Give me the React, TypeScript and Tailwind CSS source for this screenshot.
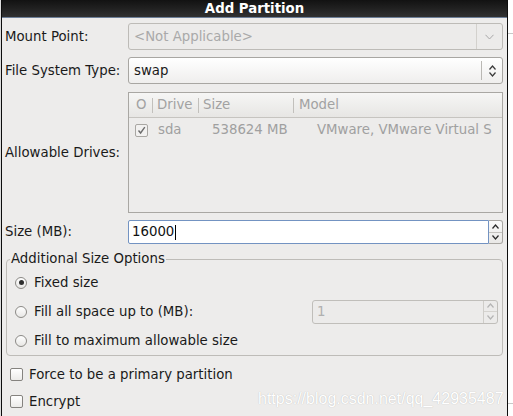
import React from 'react';

const font = "font-['DejaVu_Sans','Liberation_Sans',sans-serif]";

function Caret({ dir, color = '#3a3a3a' }: { dir: 'up' | 'down'; color?: string }) {
  return (
    <svg width="7" height="5" viewBox="0 0 7 5" className="block">
      {dir === 'up' ? (
        <path d="M0.5 4.5 L3.5 1 L6.5 4.5" fill="none" stroke={color} strokeWidth="1.2" />
      ) : (
        <path d="M0.5 0.5 L3.5 4 L6.5 0.5" fill="none" stroke={color} strokeWidth="1.2" />
      )}
    </svg>
  );
}

function Radio({ checked }: { checked?: boolean }) {
  return (
    <span className="flex h-[12px] w-[12px] items-center justify-center rounded-full border border-[#8c8a86] bg-gradient-to-b from-[#ffffff] to-[#e8e7e5]">
      {checked && <span className="h-[5px] w-[5px] rounded-full bg-[#2e2e2e]" />}
    </span>
  );
}

function CheckBox({ checked, disabled }: { checked?: boolean; disabled?: boolean }) {
  return (
    <span
      className={`flex h-[13px] w-[13px] items-center justify-center rounded-[2px] border ${
        disabled ? 'border-[#a9a7a3] bg-[#f2f1f0]' : 'border-[#85837f] bg-gradient-to-b from-[#ffffff] to-[#ecebe9]'
      }`}
    >
      {checked && (
        <svg width="9" height="9" viewBox="0 0 9 9">
          <path d="M1.5 4.5 L3.6 7 L7.8 1.2" fill="none" stroke={disabled ? '#6d6d6d' : '#222'} strokeWidth="1.4" />
        </svg>
      )}
    </span>
  );
}

function Row({ label, height, children }: { label: string; height: string; children: React.ReactNode }) {
  return (
    <div className={`flex items-center ${height}`}>
      <span className="w-[123px] shrink-0 text-[#1a1a1a]">{label}</span>
      <div className="flex h-full flex-1">{children}</div>
    </div>
  );
}

export default function App() {
  return (
    <div className={`relative flex h-[416px] w-[513px] overflow-hidden bg-[#f7f7f7] ${font} text-[13.3px] leading-[16px]`}>
      <div className="w-[1px] shrink-0 bg-[#dcdcdc]" />

      <div className="flex w-[507px] shrink-0 flex-col border-x border-[#0d0d0d] bg-[#edeceb]">
        <div className="flex h-[18px] shrink-0 items-center justify-center border-b border-[#6d7f98] bg-gradient-to-b from-[#121212] to-[#313131] text-[13.3px] font-bold text-white">
          Add Partition
        </div>

        <div className="flex flex-1 flex-col pl-[3px] pr-[4px] pt-[5px]">
          <Row label="Mount Point:" height="h-[27px]">
            <div className="flex flex-1 items-center rounded-[3px] border border-[#bdbbb7] bg-[#ecebea]">
              <span className="flex-1 pl-[5px] text-[#a9a9a9]">&lt;Not Applicable&gt;</span>
              <span className="h-full w-px bg-[#d3d1cd]" />
              <span className="flex w-[25px] justify-center">
                <svg width="9" height="6" viewBox="0 0 9 6">
                  <path d="M0.5 0.8 L4.5 5 L8.5 0.8" fill="none" stroke="#a8a8a8" strokeWidth="1" />
                </svg>
              </span>
            </div>
          </Row>

          <div className="h-[7px]" />

          <Row label="File System Type:" height="h-[27px]">
            <div className="flex flex-1 items-center rounded-[3px] border border-[#a8a6a2] bg-gradient-to-b from-[#ffffff] to-[#efeeed]">
              <span className="flex-1 pl-[5px] text-[#1a1a1a]">swap</span>
              <span className="h-[19px] w-px bg-[#bab8b4]" />
              <span className="flex w-[20px] flex-col items-center gap-[2px]">
                <Caret dir="up" />
                <Caret dir="down" />
              </span>
            </div>
          </Row>

          <div className="h-[8px]" />

          <Row label="Allowable Drives:" height="h-[121px]">
            <div className="flex flex-1 flex-col overflow-hidden border border-[#a9a7a3] bg-[#edeceb]">
              <div className="flex h-[25px] shrink-0 items-center border-b border-[#c6c4c0] bg-gradient-to-b from-[#f6f6f5] to-[#e7e6e4] text-[#a2a2a2]">
                <span className="w-[23px] pl-[7px]">O</span>
                <span className="h-[15px] w-px bg-[#c2c0bc]" />
                <span className="w-[45px] pl-[4px]">Drive</span>
                <span className="h-[15px] w-px bg-[#c2c0bc]" />
                <span className="w-[94px] pl-[4px]">Size</span>
                <span className="h-[15px] w-px bg-[#c2c0bc]" />
                <span className="pl-[5px]">Model</span>
              </div>
              <div className="flex h-[24px] items-center whitespace-nowrap text-[#a0a0a0]">
                <span className="w-[29px] pl-[6px]">
                  <CheckBox checked disabled />
                </span>
                <span className="w-[54px]">sda</span>
                <span className="w-[105px]">538624 MB</span>
                <span>VMware, VMware Virtual S</span>
              </div>
            </div>
          </Row>

          <div className="h-[7px]" />

          <Row label="Size (MB):" height="h-[24px]">
            <div className="flex flex-1 items-center rounded-l-[2px] border border-[#7393c2] bg-white">
              <span className="pl-[3px] text-[#111]">16000</span>
              <span className="ml-px h-[15px] w-px bg-black" />
            </div>
            <div className="flex w-[14px] flex-col rounded-r-[3px] border border-l-0 border-[#a8a6a2] bg-gradient-to-b from-[#fafafa] to-[#e9e8e6]">
              <span className="flex flex-1 items-center justify-center border-b border-[#c4c2be]">
                <Caret dir="up" color="#2a2a2a" />
              </span>
              <span className="flex flex-1 items-center justify-center">
                <Caret dir="down" color="#2a2a2a" />
              </span>
            </div>
          </Row>

          <div className="h-[7px]" />

          <fieldset className="ml-[1px] rounded-[4px] border border-[#bebcb8] pr-[4px] pt-[1px]">
            <legend className="ml-[3px] px-[1px] text-[#1a1a1a]">Additional Size Options</legend>
            <div className="flex h-[29px] items-center pl-[8px]">
              <Radio checked />
              <span className="ml-[7px] text-[#1a1a1a]">Fixed size</span>
            </div>
            <div className="flex h-[29px] items-center pl-[8px]">
              <Radio />
              <span className="ml-[7px] flex-1 text-[#1a1a1a]">Fill all space up to (MB):</span>
              <div className="flex h-[24px] w-[186px] rounded-[3px] border border-[#c0beba] bg-[#ecebea]">
                <span className="flex flex-1 items-center pl-[4px] text-[#b0b0b0]">1</span>
                <div className="flex w-[14px] flex-col border-l border-[#cfcdc9]">
                  <span className="flex flex-1 items-center justify-center border-b border-[#d5d3cf]">
                    <Caret dir="up" color="#b4b4b4" />
                  </span>
                  <span className="flex flex-1 items-center justify-center">
                    <Caret dir="down" color="#b4b4b4" />
                  </span>
                </div>
              </div>
            </div>
            <div className="flex h-[29px] items-center pl-[8px]">
              <Radio />
              <span className="ml-[7px] text-[#1a1a1a]">Fill to maximum allowable size</span>
            </div>
          </fieldset>

          <div className="h-[5px]" />

          <div className="flex h-[27px] items-center pl-[5px]">
            <CheckBox />
            <span className="ml-[6px] text-[#1a1a1a]">Force to be a primary partition</span>
          </div>
          <div className="flex h-[27px] items-center pl-[5px]">
            <CheckBox />
            <span className="ml-[6px] text-[#1a1a1a]">Encrypt</span>
          </div>
        </div>
      </div>

      <div className="flex w-[5px] shrink-0 flex-col bg-white">
        <div className="mt-[33px] h-px bg-[#c8c8c8]" />
        <div className="mt-[369px] h-px bg-[#c8c8c8]" />
      </div>

      <span className="absolute left-[258px] top-[390px] whitespace-nowrap font-['Liberation_Sans',Arial,sans-serif] text-[16px] leading-[18px] text-white [text-shadow:0_0_1px_rgba(0,0,0,0.25)]">
        https://blog.csdn.net/qq_42935487
      </span>
    </div>
  );
}
